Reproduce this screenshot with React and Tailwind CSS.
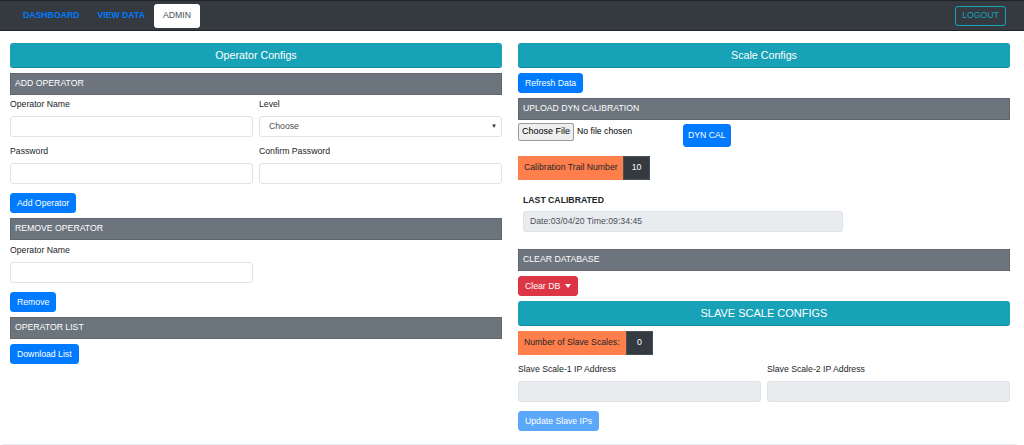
import React, { useState } from 'react';

const font = "font-['Liberation_Sans',Arial,sans-serif]";

function SectionTitle({ children }) {
  return (
    <div className="h-[25px] flex items-center justify-center rounded-[3px] bg-[#17a2b8] border-b border-[#138a9c] text-white text-[10.7px]">
      {children}
    </div>
  );
}

function Bar({ children, className = '' }) {
  return (
    <div className={`h-[22px] flex items-center pl-[4px] bg-[#6c757d] border border-[#5f666d] text-white text-[8.7px] uppercase ${className}`}>
      {children}
    </div>
  );
}

function Btn({ children, className = '', color = 'bg-[#007bff] border-[#007bff]' }) {
  return (
    <button className={`h-[20px] px-[6px] rounded-[3px] border text-white text-[8.7px] leading-none ${color} ${className}`}>
      {children}
    </button>
  );
}

function Field({ label, disabled, className = '', children }) {
  return (
    <div className={`flex flex-col ${className}`}>
      <label className="leading-[13px] text-[8.7px] text-[#212529] mb-[5px]">{label}</label>
      {children || (
        <input
          disabled={disabled}
          className={`h-[21px] w-full rounded-[3px] border border-[#dfe3e7] outline-none ${disabled ? 'bg-[#e9ecef]' : 'bg-white'}`}
        />
      )}
    </div>
  );
}

function Stat({ label, value, labelWidth }) {
  return (
    <div className="flex h-[24px] text-[8.7px]">
      <div className={`${labelWidth} flex items-center pl-[6px] bg-[#fe7f4c] text-[#212529]`}>{label}</div>
      <div className="w-[27px] flex items-center justify-center bg-[#343a40] border border-[#4a5056] text-white">{value}</div>
    </div>
  );
}

export default function App() {
  const [tab] = useState('admin');

  const tabs = [
    { id: 'dashboard', label: 'DASHBOARD' },
    { id: 'view', label: 'VIEW DATA' },
    { id: 'admin', label: 'ADMIN' },
  ];

  return (
    <div className={`w-[1024px] h-[445px] overflow-hidden bg-white ${font}`}>
      <nav className="h-[31px] bg-[#343a40] border-y border-[#202428] flex items-center pl-[14px] pr-[18px]">
        <div className="flex items-center">
          {tabs.map(t => (
            <div
              key={t.id}
              className={`h-[24px] px-[9px] flex items-center text-[8.7px] ${
                tab === t.id
                  ? 'bg-white rounded-[3px] text-[#495057]'
                  : 'text-[#007bff] font-bold'
              }`}
            >
              {t.label}
            </div>
          ))}
        </div>
        <button className="ml-auto h-[20px] w-[51px] rounded-[3px] border border-[#17a2b8] text-[#17a2b8] text-[8.7px]">
          LOGOUT
        </button>
      </nav>

      <main className="flex gap-[16px] px-[10px] pt-[12px]">
        {/* operators */}
        <section className="w-[492px] flex flex-col">
          <SectionTitle>Operator Configs</SectionTitle>
          <Bar className="mt-[5px]">Add Operator</Bar>
          <div className="grid grid-cols-2 gap-x-[6px] gap-y-[8px] mt-[3px]">
            <Field label="Operator Name" />
            <Field label="Level">
              <div className="h-[21px] rounded-[3px] border border-[#dfe3e7] flex items-center pl-[9px] pr-[4px] text-[8.7px] text-[#495057]">
                Choose
                <span className="ml-auto text-[6px] text-[#333]">▼</span>
              </div>
            </Field>
            <Field label="Password" />
            <Field label="Confirm Password" />
          </div>
          <div className="flex mt-[9px]"><Btn>Add Operator</Btn></div>
          <Bar className="mt-[5px]">Remove Operator</Bar>
          <div className="grid grid-cols-2 gap-x-[6px] mt-[4px]">
            <Field label="Operator Name" />
          </div>
          <div className="flex mt-[9px]"><Btn>Remove</Btn></div>
          <Bar className="mt-[5px]">Operator List</Bar>
          <div className="flex mt-[5px]"><Btn>Download List</Btn></div>
        </section>

        {/* scales */}
        <section className="w-[492px] flex flex-col">
          <SectionTitle>Scale Configs</SectionTitle>
          <div className="flex mt-[5px]"><Btn>Refresh Data</Btn></div>
          <Bar className="mt-[5px]">Upload Dyn Calibration</Bar>
          <div className="flex items-start mt-[3px]">
            <div className="w-[165px] flex items-center h-[18px]">
              <span className="h-[18px] px-[3px] flex items-center bg-[#efefef] border border-[#9a9a9a] rounded-[2px] text-[9px] text-black">
                Choose File
              </span>
              <span className="ml-[3px] text-[8.7px] text-black">No file chosen</span>
            </div>
            <Btn className="h-[23px] mt-[1px] !px-[4px]">DYN CAL</Btn>
          </div>
          <div className="mt-[9px]">
            <Stat label="Calibration Trail Number" value="10" labelWidth="w-[105px]" />
          </div>
          <div className="w-[330px] px-[5px] mt-[14px]">
            <div className="leading-[13px] text-[8.7px] font-bold text-[#212529]">LAST CALIBRATED</div>
            <div className="mt-[4px] h-[21px] rounded-[3px] border border-[#dfe3e7] bg-[#e9ecef] flex items-center pl-[6px] text-[8.7px] text-[#495057]">
              Date:03/04/20 Time:09:34:45
            </div>
          </div>
          <Bar className="mt-[17px]">Clear Database</Bar>
          <div className="flex mt-[5px]">
            <Btn color="bg-[#dc3545] border-[#dc3545]" className="flex items-center gap-[5px]">
              Clear DB
              <span className="w-0 h-0 border-x-[3.5px] border-x-transparent border-t-[4px] border-t-white" />
            </Btn>
          </div>
          <div className="mt-[5px] h-[25px] flex items-center justify-center rounded-[3px] bg-[#17a2b8] border-b border-[#138a9c] text-white text-[11px]">
            SLAVE SCALE CONFIGS
          </div>
          <div className="mt-[5px]">
            <Stat label="Number of Slave Scales:" value="0" labelWidth="w-[108px]" />
          </div>
          <div className="grid grid-cols-2 gap-x-[6px] mt-[8px]">
            <Field label="Slave Scale-1 IP Address" disabled />
            <Field label="Slave Scale-2 IP Address" disabled />
          </div>
          <div className="flex mt-[9px]">
            <Btn color="bg-[#5ba8fb] border-[#5ba8fb]">Update Slave IPs</Btn>
          </div>
        </section>
      </main>

      <div className="ml-[2px] mr-[7px] mt-[13px] h-[3px] bg-[#e9ecef] rounded-[2px]" />
    </div>
  );
}
